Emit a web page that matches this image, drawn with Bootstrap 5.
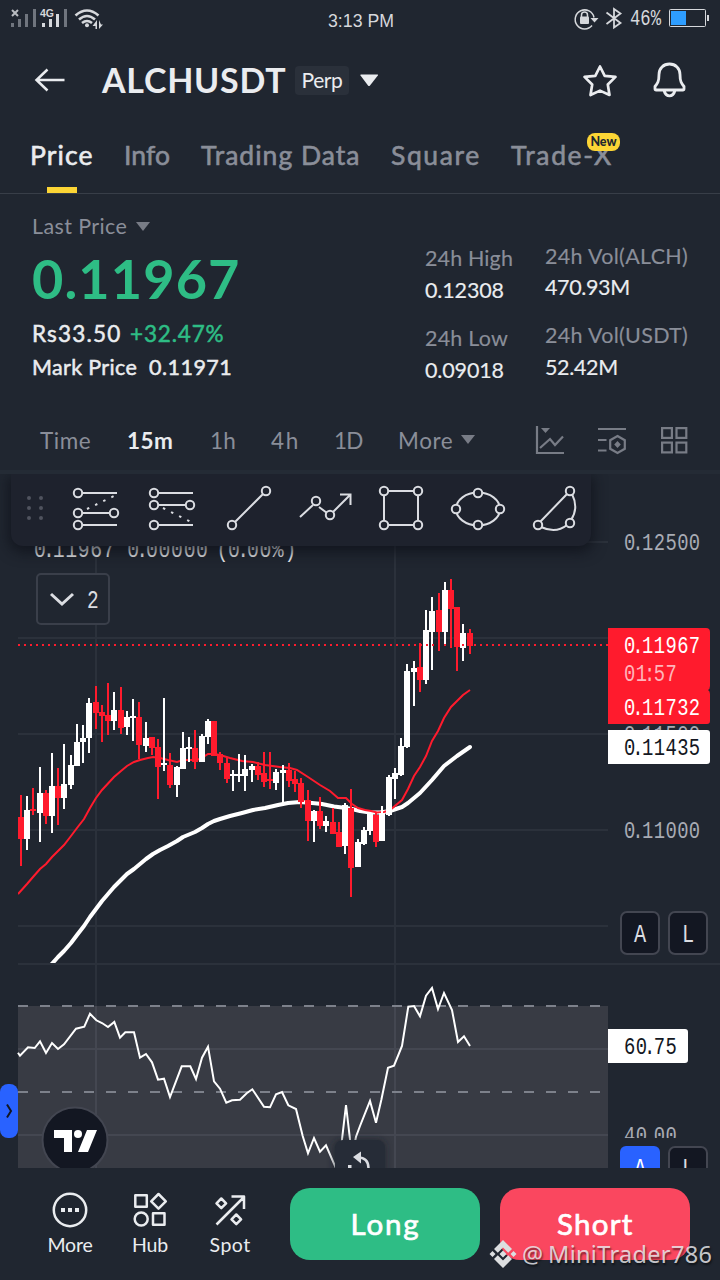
<!DOCTYPE html>
<html lang="en">
<head>
<meta charset="utf-8">
<meta name="viewport" content="width=device-width, initial-scale=1">
<title>ALCHUSDT Perp</title>
<link rel="stylesheet" href="https://cdn.jsdelivr.net/npm/bootstrap@5.3.0/dist/css/bootstrap.min.css">
<style>
:root{--page:#202630;--ink:#eaecef;--dim:#8a8e99;--up:#2ebd85;--down:#fa475f;--gold:#fcd535}
html,body{width:720px;height:1280px;overflow:hidden}
body{background:var(--page);color:var(--ink);font-family:Lato,"Open Sans",sans-serif;position:relative}
svg{display:block;flex:none}
svg text{font-family:"Liberation Mono",monospace}
[data-w]{display:inline-block;white-space:nowrap}
.dim{color:var(--dim)}
.up{color:var(--up)}
.status-row{height:40px;padding:0 11px 0 11px}
.title-row{height:80px;padding:0 32px 0 34px}
.pair{font-size:34px;font-weight:700;line-height:40px}
.perp{background:#2a303a;border-radius:4px;width:54px;height:29px;font-size:21px;line-height:27px;text-align:center}
.tab-row{height:74px;padding:0 30px;gap:31px;border-bottom:1px solid #383e48;font-size:26.5px;line-height:71px;color:var(--dim);-webkit-text-stroke:.6px currentColor}
.tab-item.on{color:var(--ink)}
.tab-item.on::after{content:"";position:absolute;left:17px;bottom:0;width:30px;height:6px;background:var(--gold)}
.new-tag{position:absolute;left:76px;top:13px;width:33px;height:18px;border-radius:8px;background:var(--gold);color:#202630;font-size:12.5px;font-weight:900;line-height:18px;text-align:center;-webkit-text-stroke:0}
.quote{height:216px;padding:15px 32px 0 32px}
.quote-main{width:393px}
.big-price{font-size:54px;font-weight:700;line-height:72px;height:72px}
.lab{font-size:21.5px;line-height:34px}
.fiat{font-size:22.5px;line-height:38px;height:37px;-webkit-text-stroke:.5px currentColor}
.mk{font-size:21.5px;line-height:31px;-webkit-text-stroke:.5px currentColor}
.stat-a{width:120px;padding-top:33px;font-size:21.5px;line-height:32px}
.stat-b{padding-top:32px;font-size:21.5px;line-height:31px}
.stat-a,.stat-b{-webkit-text-stroke:.15px currentColor}
.interval-row{height:64px;padding:1px 32px 0 40px;border-bottom:4px solid #242b35;font-size:22.5px;color:var(--dim)}
.interval-row .on{color:var(--ink);font-weight:700}
.interval-row svg{position:relative;top:-1px}
.plot{height:694px}
.tools{position:absolute;left:11px;top:0;width:580px;height:72px;background:#1e222d;border-radius:0 0 12px 12px;box-shadow:0 4px 14px 2px rgba(13,16,24,.75);z-index:2}
.foot{height:112px;padding:20px 30px 0 30px}
.foot-nav{width:80px;font-size:19.5px;line-height:24px}
.trade{width:190px;height:72px;border-radius:20px;color:#fff;font-size:29.5px;line-height:72px;padding:0;border:0;-webkit-text-stroke:.7px currentColor}
.long-btn,.long-btn:hover{background:var(--up);color:#fff}
.short-btn,.short-btn:hover{background:var(--down);color:#fff}
.sign{position:absolute;right:8px;top:1238px;font-family:"Noto Sans",sans-serif;font-size:23.5px;line-height:32px;color:rgba(235,235,238,.84);text-shadow:1px 2px 2px rgba(0,0,0,.55)}
</style>
</head>
<body>

<header>
  <div class="status-row d-flex align-items-start justify-content-between">
    <svg width="317" height="40" viewBox="11 0 317 40">
      <path d="M12 10l6 6M18 10l-6 6" stroke="#b9bcc1" stroke-width="2"/>
      <g fill="#70757e"><rect x="11" y="23" width="3" height="4"/><rect x="18" y="19" width="3" height="8"/><rect x="25" y="14" width="3" height="13"/><rect x="33" y="9" width="3" height="18"/><rect x="64" y="9" width="3" height="18"/></g>
      <g fill="#d6d8dc"><rect x="42" y="23" width="3" height="4"/><rect x="49" y="19" width="3" height="8"/><rect x="56" y="14" width="3" height="13"/></g>
      <text x="40" y="17" textLength="14" lengthAdjust="spacingAndGlyphs" style="font:bold 10px 'Liberation Sans',sans-serif" fill="#d6d8dc">4G</text>
      <g fill="none" stroke="#d6d8dc" stroke-width="2.6"><path d="M75.500 15.500Q87 5.500 98.500 15.500M79 19.500Q87 12.500 95 19.500M82 23Q87 19 92 23"/></g>
      <circle cx="87" cy="25.300" r="2" fill="#d6d8dc"/>
      <path d="M97 20v9h-1.500v-3h-3zM99 20v9l4-4.500h-2z" fill="#d6d8dc"/>
    </svg>
    <svg class="me-auto" width="74" height="40" viewBox="328 0 74 40"><text x="328" y="27" font-size="19" fill="#d6d8dc" textLength="66" lengthAdjust="spacingAndGlyphs" style="font-family:'Liberation Sans',sans-serif">3:13 PM</text></svg>
    <svg width="140" height="40" viewBox="569 0 140 40">
      <g fill="none" stroke="#d6d8dc" stroke-width="1.500"><path d="M592 25.500A9.500 9.500 0 1 1 594 17.500"/><path d="M581.500 17v-2a3 3 0 0 1 6 0v2"/></g>
      <rect x="580" y="16.500" width="9" height="7.500" rx="1" fill="#d6d8dc"/><path d="M590.500 18h8l-4 4.500z" fill="#d6d8dc"/>
      <path d="M606.500 12.500l14 10.500-6.500 4.500V9l6.500 4.500-14 10.500" fill="none" stroke="#d6d8dc" stroke-width="1.800"/>
      <text x="630" y="25" font-size="22" fill="#d6d8dc" textLength="31" lengthAdjust="spacingAndGlyphs">46%</text>
      <rect x="669.500" y="9.500" width="36" height="17" rx="1" fill="none" stroke="#d6d8dc"/><rect x="671" y="11" width="15" height="14" fill="#2e9dff"/><rect x="707" y="15" width="2" height="6" fill="#d6d8dc"/>
    </svg>
  </div>
  <div class="title-row d-flex align-items-center">
    <svg width="32" height="26" viewBox="34 67 32 26"><path d="M64.500 80H36.500M47.500 69.500L36.500 80L47.500 90.500" fill="none" stroke="#eaecef" stroke-width="2.500"/></svg>
    <h1 class="pair mb-0" style="margin-left:36px"><span data-w="184">ALCHUSDT</span></h1>
    <div class="perp" style="margin-left:9px"><span data-w="41">Perp</span></div>
    <svg style="margin-left:11px" width="19" height="13" viewBox="0 0 19 13"><path d="M1 .5h16.500q1 0 .3 1L10 11.500q-1 1-2 0L.5 1.500q-.5-1 .5-1z" fill="#eaecef"/></svg>
    <svg class="ms-auto" width="36" height="36" viewBox="582 62 36 36"><path d="M600 66.500l4.700 9.400 10.800 1-7.700 7.600 1.700 10.500-9.500-4.400-9.500 4.400 1.700-10.500-7.700-7.600 10.800-1z" fill="none" stroke="#eaecef" stroke-width="2.700" stroke-linejoin="round"/></svg>
    <svg style="margin-left:34px" width="36" height="40" viewBox="652 60 36 40"><path d="M669.500 64c-6 0-10.500 4.300-10.500 10.500 0 7-1.500 9-4 12v2.300q0 1.200 1.200 1.200h26.600q1.200 0 1.200-1.200v-2.300c-2.500-3-4-5-4-12C680 68.300 675.500 64 669.500 64zM664 90.500q1.500 5.300 5.500 5.300t5.500-5.300" fill="none" stroke="#eaecef" stroke-width="2.800"/></svg>
  </div>
  <nav class="tab-row d-flex">
    <div class="tab-item on position-relative" data-w="63">Price</div>
    <div class="tab-item" data-w="46">Info</div>
    <div class="tab-item" data-w="159">Trading Data</div>
    <div class="tab-item" data-w="89">Square</div>
    <div class="tab-item position-relative"><span data-w="101">Trade-X</span><div class="new-tag">New</div></div>
  </nav>
</header>

<section class="quote d-flex">
  <div class="quote-main">
    <div class="lab dim d-flex align-items-center"><span data-w="95">Last Price</span><svg style="margin-left:9px" width="14" height="9" viewBox="0 0 14 9"><path d="M0 0h14L7 9z" fill="#787c86"/></svg></div>
    <div class="big-price up"><span data-w="208">0.11967</span></div>
    <div class="fiat"><span data-w="89">Rs33.50</span><span class="up" style="margin-left:9px" data-w="94">+32.47%</span></div>
    <div class="mk"><span data-w="105">Mark Price</span><span style="margin-left:12px" data-w="83">0.11971</span></div>
  </div>
  <div class="stat-a">
    <div class="dim"><span data-w="88">24h High</span></div><div><span data-w="79">0.12308</span></div>
    <div class="dim mt-3"><span data-w="83">24h Low</span></div><div><span data-w="79">0.09018</span></div>
  </div>
  <div class="stat-b">
    <div class="dim"><span data-w="143">24h Vol(ALCH)</span></div><div><span data-w="85">470.93M</span></div>
    <div class="dim" style="margin-top:17px"><span data-w="143">24h Vol(USDT)</span></div><div style="margin-top:1px"><span data-w="73">52.42M</span></div>
  </div>
</section>

<div class="interval-row d-flex align-items-center">
  <span data-w="51">Time</span>
  <span class="on" style="margin-left:36px" data-w="46">15m</span>
  <span style="margin-left:37px" data-w="26">1h</span>
  <span style="margin-left:35px" data-w="28">4h</span>
  <span style="margin-left:35px" data-w="29">1D</span>
  <span style="margin-left:35px" data-w="55">More</span>
  <svg style="margin-left:8px" width="14" height="9" viewBox="0 0 14 9"><path d="M0 0h14L7 9z" fill="#787c86"/></svg>
  <svg class="ms-auto" width="30" height="30" viewBox="535 425 30 30"><path d="M537 426v27h27M540 448l10-9 5 6 8-8.500" fill="none" stroke="#787c86" stroke-width="2.200"/><path d="M541 428h9l-4.500 5z" fill="#787c86"/></svg>
  <svg style="margin-left:32px" width="30" height="30" viewBox="597 425 30 30"><g fill="none" stroke="#787c86" stroke-width="2.200"><path d="M598 429h28M598 440h8.500M598 450.500h8.500"/><path d="M617.500 436l7.300 4.200v8.600l-7.300 4.200-7.300-4.200v-8.600z"/></g><path d="M617.500 441l3.300 3.500-3.300 3.500-3.300-3.500z" fill="#787c86"/></svg>
  <svg style="margin-left:32px;margin-right:-1px" width="30" height="30" viewBox="659 425 30 30"><g fill="none" stroke="#787c86" stroke-width="2.200"><rect x="662.100" y="428.100" width="9.800" height="9.800"/><rect x="676.500" y="428.100" width="9.800" height="9.800"/><rect x="662.100" y="442.600" width="9.800" height="9.800"/><rect x="676.500" y="442.600" width="9.800" height="9.800"/></g></svg>
</div>

<main class="plot position-relative overflow-hidden">
  <div class="tools">
    <svg width="580" height="72" viewBox="11 474 580 72">
      <g fill="#50535e"><circle cx="29" cy="498" r="2"/><circle cx="41" cy="498" r="2"/><circle cx="29" cy="508" r="2"/><circle cx="41" cy="508" r="2"/><circle cx="29" cy="518" r="2"/><circle cx="41" cy="518" r="2"/></g>
      <g fill="none" stroke="#dbdde2" stroke-width="2">
        <path d="M82 493h35M82 513h28M82 525h35M158 493h35M158 505h28M158 525h35"/>
        <path d="M87 509l27-13M163 508l28 14" stroke-dasharray="2.500 6.500"/>
        <path d="M235 522l28-28M300 517l13-12M319 507l8 6M333 512l17-17M340 494.500h10.500V505M384 495v26M418 495v26M388 491h26M388 525h26"/>
        <ellipse cx="478" cy="509" rx="22" ry="16.500"/>
        <path d="M540 522l27-28M572 494q7 14-1 26M541 527q15 7 26-2"/>
      </g>
      <g id="knobs" fill="#1e222d" stroke="#dbdde2" stroke-width="2"></g>
    </svg>
  </div>
  <svg id="chart" width="720" height="694" viewBox="0 474 720 694"></svg>
</main>

<footer class="foot d-flex">
  <div class="d-flex text-center">
    <div class="foot-nav d-flex flex-column align-items-center">
      <svg width="40" height="44" viewBox="50 1188 40 44"><circle cx="70" cy="1210" r="16.200" fill="none" stroke="#eaecef" stroke-width="2.500"/><path d="M61 1208h4v4h-4zM68 1208h4v4h-4zM75 1208h4v4h-4z" fill="#eaecef"/></svg>
      <span style="margin-top:1px" data-w="45">More</span>
    </div>
    <div class="foot-nav d-flex flex-column align-items-center">
      <svg width="40" height="44" viewBox="130 1188 40 44"><g fill="none" stroke="#eaecef" stroke-width="2.500" stroke-linejoin="round"><rect x="135.300" y="1195.300" width="11.500" height="11.500"/><path d="M158.500 1194l7.300 7.300-7.300 7.300-7.300-7.300z"/><circle cx="141.200" cy="1219" r="6.500"/><rect x="153" y="1213.300" width="11.500" height="11.500"/></g></svg>
      <span style="margin-top:1px" data-w="36">Hub</span>
    </div>
    <div class="foot-nav d-flex flex-column align-items-center">
      <svg width="40" height="44" viewBox="210 1188 40 44"><g fill="none" stroke="#eaecef" stroke-width="2.500" stroke-linejoin="round"><path d="M216.500 1224.500l27-27M231.500 1196.500h12.500v12.500M221.300 1198.500l4.800 4.800-4.800 4.800-4.800-4.800zM236.300 1214.500l4.800 4.800-4.800 4.800-4.800-4.800z"/></g></svg>
      <span style="margin-top:1px" data-w="41">Spot</span>
    </div>
  </div>
  <button class="btn trade long-btn" style="margin-left:20px"><span data-w="69">Long</span></button>
  <button class="btn trade short-btn" style="margin-left:20px"><span data-w="76">Short</span></button>
</footer>

<div class="sign d-flex align-items-center">
  <svg width="28" height="30" viewBox="-14 -15 28 30" fill="#dcdee0"><path d="M0-14l9 9-3.800 3.800L0-6.500l-5.200 5.300L-9-5zM0 14l9-9-3.800-3.800L0 6.500l-5.200-5.300L-9 5zM-10.500-3l3 3-3 3-3-3zM10.500-3l3 3-3 3-3-3zM0-3.500l3.500 3.500L0 3.500-3.500 0z"/></svg>
  <span style="margin-left:5px" data-w="19">@</span><span style="margin-left:7px" data-w="164">MiniTrader786</span>
</div>

<script>
// Track each label out to its design width.
function fitLabels(){
  document.querySelectorAll('[data-w]').forEach(el=>{
    const r=document.createRange();r.selectNodeContents(el);
    const n=el.textContent.length, want=+el.dataset.w, gap=(want-r.getBoundingClientRect().width)/(n>1?n-.5:1);
    el.style.letterSpacing=gap.toFixed(3)+'px';
    el.style.width=want+'px';
  });
}
fitLabels();

document.getElementById('knobs').innerHTML=[[78,493],[78,513],[114,513],[78,525],[154,493],[154,505],[190,505],[154,525],[232,525],[266,491],[316,501],[330,515],[384,491],[418,491],[384,525],[418,525],[456,509],[500,509],[478,493],[478,525],[538,525],[570,491],[570,523]]
  .map(p=>`<circle cx="${p[0]}" cy="${p[1]}" r="4.200"/>`).join('');

// x, high, low, body top, body bottom, 1 = rising
const candles=[
[21,795,866,817,839,0],[27,796,850,810,839,1],[33,788,815,809,811,0],[40,767,842,793,813,1],[46,790,824,793,816,0],[52,753,833,786,816,1],[58,768,825,786,798,0],[64,744,809,784,798,1],[71,755,789,765,785,1],[77,724,766,742,766,1],[83,725,763,738,742,1],[89,698,753,703,738,1],[96,686,729,702,713,0],[102,705,742,712,716,0],[108,683,735,715,721,0],[114,692,730,710,721,1],[121,687,734,710,728,0],[127,711,735,717,727,1],[133,699,741,716,718,1],[139,702,759,717,745,0],[146,722,752,738,746,1],[152,737,755,737,748,0],[158,739,799,747,767,0],[164,698,771,763,765,1],[170,753,788,765,785,0],[177,766,797,767,785,1],[183,732,769,748,769,1],[189,737,762,747,749,1],[195,730,769,748,762,0],[202,734,762,736,762,1],[208,719,744,721,737,1],[214,721,756,721,756,0],[220,752,770,754,763,0],[227,758,783,763,779,0],[233,770,791,774,776,1],[239,754,782,774,776,1],[245,755,791,769,776,1],[252,764,782,766,770,1],[258,762,780,766,775,0],[264,752,787,773,782,0],[270,752,789,779,781,0],[276,769,790,772,783,1],[283,765,802,770,773,1],[289,763,787,770,781,0],[295,771,792,779,784,0],[301,778,808,783,802,0],[308,790,841,800,821,0],[314,810,842,811,821,1],[320,797,829,811,826,0],[326,816,832,821,826,1],[333,808,834,822,834,0],[339,822,847,832,847,0],[345,803,854,805,846,1],[351,789,897,808,868,0],[358,839,867,842,867,1],[364,827,845,830,844,1],[370,812,835,813,831,1],[376,812,847,815,842,0],[382,806,841,813,841,1],[389,775,816,777,815,1],[395,768,799,773,779,1],[401,738,776,746,775,1],[407,664,748,671,747,1],[414,661,706,668,672,1],[420,643,692,667,680,0],[426,610,684,630,680,1],[432,597,670,611,632,1],[439,593,651,610,632,0],[445,582,644,590,632,1],[451,579,648,590,609,0],[457,607,671,607,647,0],[463,624,661,633,648,1],[470,629,654,633,646,0]];
const fastMa='18,894 27,884 33,877 40,869 46,864 52,857 64,845 71,836 77,828 84,819 90,808 96,798 102,790 114,777 121,771 127,766 134,762 140,760 148,758 153,757 160,758 168,760 177,762 183,760 195,760 200,759 208,754 214,754 220,755 230,758 242,761 253,762 265,765 280,767 290,768 297,770 308,777 320,785 330,791 338,798 346,798 352,804 358,808 365,810 371,811 377,812.500 384,812 390,810 402,800 408,789 414,776 420,767 426,756 432,741 438,731 444,718 451,707 463,695 470,690';
const slowMa='50,966 58,957 64,951 71,943 77,935 84,926 90,917 96,909 102,901 108,894 114,887 121,880 127,874 134,869 146,859 153,854 160,850 168,846 177,841 183,837 195,832 202,828 208,824 214,821 220,819 230,816 242,813 253,810 265,808 278,805 288,803 300,802 312,803 322,804 334,806.500 346,808 352,809 360,811 370,812.500 380,812.500 390,811 402,807 408,803 420,793 432,780 444,766 457,756 470,747';
const rsi=[54,248,60,257,84,232,104,234,120,214,138,249,156,219,174,237,192,223,228,176,253,170,270,131,289,151,306,159,324,171,343,156,360,203,376,187,402,187,420,263,438,252,456,277,474,329,492,326,510,381,545,289,571,289,588,327,606,263,624,230,642,334,660,356,679,398,696,391,720,389,740,370,757,358,792,410,810,412,828,373,846,366,865,406,888,417,908,498,924,550,942,504,960,545,978,526,1006,590,1020,560,1038,405,1056,560,1068,500,1080,468,1110,393,1128,458,1144,390,1164,293,1182,287,1206,228,1225,110,1242,108,1260,139,1278,77,1296,54,1314,117,1332,69,1356,120,1374,216,1392,199,1410,228];
let rp='';for(let i=0;i<rsi.length;i+=2)rp+=(rsi[i]/3).toFixed(1)+','+(970+rsi[i+1]/3).toFixed(1)+' ';

// Condensed figures with a narrow decimal point.
function figs(x,y,s,fill,size=23,k=.82,adv=11.7,gap=6){
  let p=0;const xs=[...s].map(c=>{const narrow='.:'.includes(c);const at=narrow?p-3.500:c==='('?p-4:p;p+=narrow?6.300:c===' '?gap:c==='('?7.5:adv;return (at/k).toFixed(1)});
  return `<text transform="translate(${x} ${y}) scale(${k} 1)" x="${xs.join(' ')}" font-size="${size}" fill="${fill}">${s}</text>`;
}
let o='<defs><clipPath id="mainPane"><rect x="18" y="474" width="590" height="489"/></clipPath><clipPath id="cutB"><rect x="608" y="1120" width="112" height="18"/></clipPath><filter id="soft" x="-30%" y="-30%" width="160%" height="160%"><feGaussianBlur stdDeviation="3"/></filter></defs>';
o+='<rect x="18" y="1006" width="590" height="162" fill="#383b44"/>';
o+='<g fill="#2b313b"><rect x="95" y="474" width="2" height="532"/><rect x="394" y="474" width="2" height="532"/>'+[541,637,733,829,925].map(y=>`<rect x="18" y="${y}" width="590" height="2"/>`).join('')+'<rect x="18" y="963" width="702" height="2"/></g>';
o+='<g fill="#444751"><rect x="95" y="1006" width="2" height="162"/><rect x="394" y="1006" width="2" height="162"/><rect x="18" y="1048" width="590" height="2"/><rect x="18" y="1134" width="590" height="2"/></g>';
o+='<path d="M18 1006H602M18 1092H602" stroke="#7d818b" stroke-width="2" stroke-dasharray="10 12"/>';
o+='<g clip-path="url(#mainPane)">';
o+=`<polyline points="${slowMa}" fill="none" stroke="#fff" stroke-width="4" stroke-linejoin="round" stroke-linecap="round"/>`;
o+=`<polyline points="${fastMa}" fill="none" stroke="#ff1b2d" stroke-width="2"/>`;
for(const [x,h,l,t,b,u] of candles){const c=u?'#fff':'#ff1b2d';o+=`<path d="M${x-1} ${h}h2V${l}h-2zM${x-3} ${t}h6V${b}h-6z" fill="${c}"/>`}
o+='</g><path d="M18 645H608" stroke="#ff1b2d" stroke-width="2" stroke-dasharray="2 4"/>';
o+=`<polyline points="${rp}" fill="none" stroke="#fff" stroke-width="2"/>`;
o+=figs(34,557,'0.11967 0.00000 (0.00%)','#eaecef',23,.86,12.5,12);
o+='<rect x="37" y="574" width="72" height="50" rx="4" fill="#202630" stroke="#3a3f4a" stroke-width="2"/><path d="M51 594l11 10 11-10" fill="none" stroke="#dbdde2" stroke-width="3"/>'+figs(87,608,'2','#dbdde2',25,.78);
o+=figs(624,550,'0.12500','#a8abb4')+figs(624,838,'0.11000','#a8abb4')+figs(624,742,'0.11500','#a8abb4')+'<g clip-path="url(#cutB)">'+figs(624,1143,'40.00','#a8abb4')+'</g>';
o+='<path d="M608 628h98q4 0 4 4v54q0 3-2 4 2 1 2 4v27q0 3-3 3h-99z" fill="#ff1b2d"/><path d="M608 730h99q3 0 3 3v28q0 3-3 3h-99zM608 1029h77q3 0 3 3v28q0 3-3 3h-77z" fill="#fff"/>';
o+=figs(624,653,'0.11967','#fff')+figs(624,681,'01:57','#ffb5bb')+figs(624,715,'0.11732','#fff')+figs(624,755,'0.11435','#131722')+figs(624,1054,'60.75','#131722');
o+='<g fill="#131722" stroke="#434651" stroke-width="2"><rect x="621" y="912" width="38" height="42" rx="6"/><rect x="669" y="912" width="38" height="42" rx="6"/><rect x="669" y="1147" width="38" height="42" rx="6"/></g><rect x="620" y="1146" width="40" height="44" rx="6" fill="#2962ff"/>';
o+=figs(634,942,'A','#dbdde2',26,.78)+figs(682,942,'L','#dbdde2',26,.78)+figs(634,1176,'A','#fff',26,.78)+figs(682,1176,'L','#dbdde2',26,.78);
o+='<circle cx="75" cy="1140" r="32.500" fill="#131722" stroke="#434651" stroke-width="2"/><g fill="#fff"><path d="M54 1130h18v22h-8v-14H54zM87 1130h10l-9 22H78z"/><circle cx="78" cy="1134" r="4"/></g>';
o+='<rect x="333" y="1139" width="53" height="50" rx="9" fill="#171b25" opacity=".55" filter="url(#soft)"/><rect x="335" y="1140" width="50" height="50" rx="8" fill="#262c37"/><path d="M358 1157.500c7 0 10.500 4 10.500 11" fill="none" stroke="#dbdde2" stroke-width="2.500"/><path d="M353 1157l8-5.500v12zM348 1165h3.500v3H348z" fill="#dbdde2"/>';
o+='<rect x="0" y="1084" width="18" height="54" rx="8" fill="#2962ff"/><path d="M7 1104.500l4 6.500-4 6.500" fill="none" stroke="#131722" stroke-width="2"/>';
document.getElementById('chart').innerHTML=o;
</script>
<script src="https://cdn.jsdelivr.net/npm/bootstrap@5.3.0/dist/js/bootstrap.bundle.min.js"></script>
</body>
</html>
